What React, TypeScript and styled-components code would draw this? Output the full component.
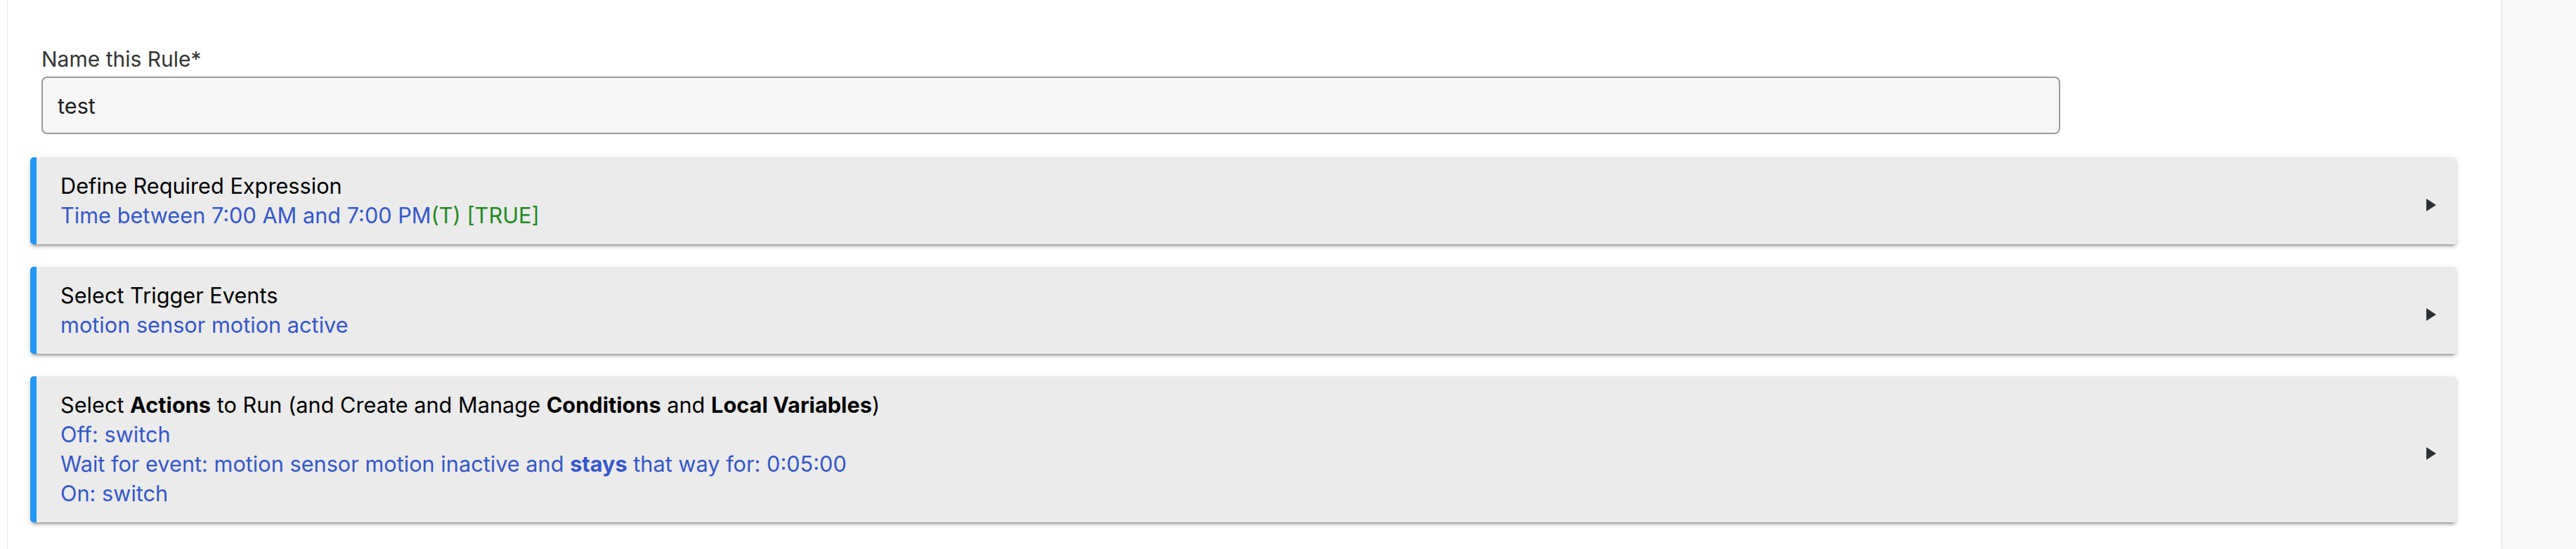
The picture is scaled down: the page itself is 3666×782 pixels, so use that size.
import React from 'react';
import styled, { createGlobalStyle } from 'styled-components';

const GlobalStyle = createGlobalStyle`
  html, body {
    margin: 0;
    padding: 0;
    background: #ffffff;
  }
  body {
    font-family: Inter, "Noto Sans", Roboto, sans-serif;
    -webkit-font-smoothing: antialiased;
  }
`;

const Page = styled.div`
  display: flex;
  height: 782px;
  padding-left: 10px;
  background: #ffffff;
`;

const Main = styled.main`
  flex: 1;
  border-left: 1px solid #ececec;
  padding: 63px 64px 0 32px;
  background: #ffffff;
`;

const Sidebar = styled.aside`
  width: 105px;
  background: #f8f8f8;
  border-left: 1px solid #e6e6e6;
  box-shadow: -1px 0 3px rgba(0, 0, 0, 0.06);
`;

const Field = styled.div`
  display: flex;
  flex-direction: column;
  gap: 4px;
  padding-left: 16px;
  margin-bottom: 33px;
`;

const Label = styled.label`
  font-size: 30px;
  line-height: 42px;
  color: #333333;
`;

const NameInput = styled.input`
  box-sizing: border-box;
  width: 2873px;
  height: 82px;
  padding: 0 21px;
  border: 2px solid #9b9b9b;
  border-radius: 8px;
  background: #f6f6f6;
  font-family: inherit;
  font-size: 30.7px;
  color: #1e1e1e;
  outline: none;
`;

const Sections = styled.div`
  display: flex;
  flex-direction: column;
  gap: 32px;
`;

const Card = styled.div`
  display: flex;
  align-items: center;
  background: #ebebeb;
  border-left: 9px solid #2196f3;
  border-radius: 5px;
  box-shadow: 0 4px 4px 0 rgba(0, 0, 0, 0.14), 0 6px 2px -4px rgba(0, 0, 0, 0.2),
    0 2px 10px 0 rgba(0, 0, 0, 0.1);
`;

const CardBody = styled.div`
  flex: 1;
  padding: 20px 0 20px 34px;
  font-size: 30.7px;
  line-height: 42px;
`;

const Title = styled.div`
  color: #000000;
  b {
    font-weight: 700;
  }
`;

const Detail = styled.div`
  color: #3557c9;
  b {
    font-weight: 700;
  }
`;

const Status = styled.span`
  color: #1f8a1f;
`;

const Arrow = styled.svg`
  width: 14px;
  height: 18px;
  margin: 12px 29px 0 0;
  flex-shrink: 0;
`;

const Caret = () => (
  <Arrow viewBox="0 0 14 18">
    <path d="M0 0 L14 9 L0 18 Z" fill="#2b2f36" />
  </Arrow>
);

const App: React.FC = () => {
  return (
    <>
      <GlobalStyle />
      <Page>
        <Main>
          <Field>
            <Label htmlFor="rule-name">Name this Rule*</Label>
            <NameInput id="rule-name" defaultValue="test" />
          </Field>

          <Sections>
            <Card>
              <CardBody>
                <Title>Define Required Expression</Title>
                <Detail>
                  Time between 7:00 AM and 7:00 PM<Status>(T) [TRUE]</Status>
                </Detail>
              </CardBody>
              <Caret />
            </Card>

            <Card>
              <CardBody>
                <Title>Select Trigger Events</Title>
                <Detail>motion sensor motion active</Detail>
              </CardBody>
              <Caret />
            </Card>

            <Card>
              <CardBody>
                <Title>
                  Select <b>Actions</b> to Run (and Create and Manage <b>Conditions</b> and{' '}
                  <b>Local Variables</b>)
                </Title>
                <Detail>Off: switch</Detail>
                <Detail>
                  Wait for event: motion sensor motion inactive and <b>stays</b> that way for: 0:05:00
                </Detail>
                <Detail>On: switch</Detail>
              </CardBody>
              <Caret />
            </Card>
          </Sections>
        </Main>
        <Sidebar />
      </Page>
    </>
  );
};

export default App;
